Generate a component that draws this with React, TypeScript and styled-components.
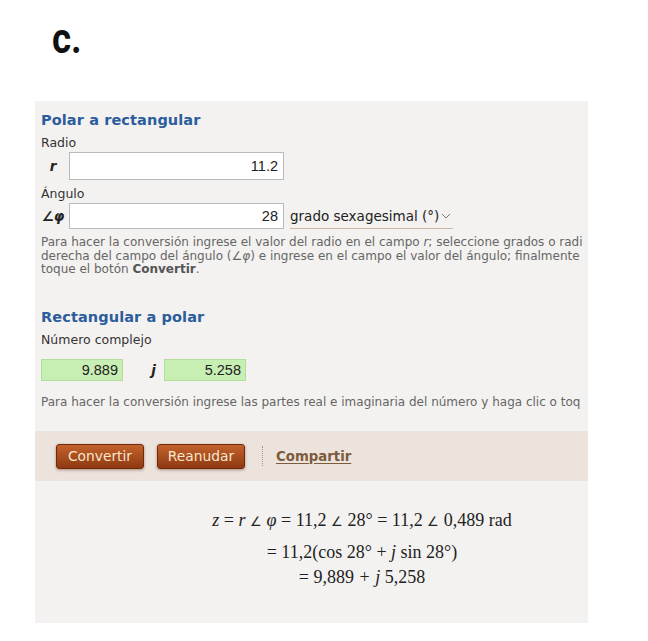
import React from "react";
import styled, { createGlobalStyle } from "styled-components";

const Global = createGlobalStyle`
  html, body { margin: 0; padding: 0; background: #ffffff; }
  body { width: 648px; height: 641px; overflow: hidden; }
`;

const Page = styled.div`
  padding: 18px 0 0 35px;
`;

const Letter = styled.div`
  font-family: Roboto, "Liberation Sans", sans-serif;
  font-weight: 700;
  font-size: 42px;
  line-height: 42px;
  color: #111;
  margin-left: 17px;
  transform: scaleX(0.87);
  transform-origin: left center;
  height: 42px;
`;

const Panel = styled.div`
  margin-top: 41px;
  width: 553px;
  height: 522px;
  background: #f3f2f0;
  overflow: hidden;
`;

const Inner = styled.div`
  width: 654px;
  font-family: "DejaVu Sans", Verdana, sans-serif;
  color: #333;
`;

const Section = styled.div`
  padding: 0 0 0 6px;
`;

const Heading = styled.h2<{ $top: number }>`
  margin: ${(p) => p.$top}px 0 0 0;
  font-size: 14.5px;
  line-height: 20px;
  font-weight: 700;
  color: #2b5c9c;
  letter-spacing: 0.1px;
`;

const Label = styled.div<{ $top: number }>`
  margin-top: ${(p) => p.$top}px;
  font-size: 12.5px;
  line-height: 16px;
  color: #333;
`;

const FieldRow = styled.div<{ $top: number }>`
  display: flex;
  align-items: center;
  margin-top: ${(p) => p.$top}px;
`;

const Sym = styled.span`
  width: 24px;
  text-align: center;
  font-style: italic;
  font-weight: 700;
  font-size: 13.5px;
  color: #222;
  margin-right: 4px;
`;

const TextBox = styled.div<{ $h: number }>`
  box-sizing: border-box;
  width: 215px;
  height: ${(p) => p.$h}px;
  background: #fff;
  border: 1px solid #b9b9b9;
  font-family: "Liberation Sans", Arial, sans-serif;
  font-size: 14.5px;
  color: #222;
  display: flex;
  align-items: center;
  justify-content: flex-end;
  padding-right: 5px;
`;

const Select = styled.div`
  margin-left: 6px;
  height: 26px;
  box-sizing: border-box;
  border-bottom: 1px solid #cbb9a6;
  display: flex;
  align-items: center;
  gap: 2px;
  font-size: 13.5px;
  color: #222;
  padding-right: 2px;
`;

const Help = styled.p<{ $top: number }>`
  margin: ${(p) => p.$top}px 0 0 0;
  font-size: 12px;
  line-height: 13.5px;
  color: #666;
  white-space: nowrap;
  i { font-style: italic; }
  b { font-weight: 700; color: #555; }
`;

const GreenBox = styled.div`
  box-sizing: border-box;
  width: 82px;
  height: 22px;
  background: #c8efb3;
  border: 1px solid #b2dd9b;
  font-family: "Liberation Sans", Arial, sans-serif;
  font-size: 14.5px;
  color: #222;
  display: flex;
  align-items: center;
  justify-content: flex-end;
  padding-right: 4px;
`;

const JSym = styled.span`
  box-sizing: border-box;
  width: 41px;
  text-align: right;
  padding-right: 8px;
  font-style: italic;
  font-weight: 700;
  font-size: 13.5px;
  color: #222;
`;

const Bar = styled.div`
  margin-top: 22px;
  height: 50px;
  background: #ece3dd;
  display: flex;
  align-items: center;
  padding-left: 21px;
`;

const Btn = styled.button`
  box-sizing: border-box;
  width: 88px;
  height: 25px;
  margin-right: 13px;
  border: 1px solid #6e2a0b;
  border-radius: 3px;
  background: linear-gradient(#c3622b, #8e3912);
  box-shadow: 0 1px 3px rgba(80, 30, 0, 0.45);
  color: #f8e6cc;
  font-family: "DejaVu Sans", Verdana, sans-serif;
  font-size: 13.8px;
  padding: 0;
`;

const Sep = styled.div`
  width: 0;
  height: 20px;
  border-left: 1px dotted #9a9a9a;
  margin: 0 13px 0 4px;
`;

const Link = styled.a`
  font-size: 13.3px;
  font-weight: 700;
  color: #7c5b3e;
  text-decoration: underline;
  text-underline-offset: 2px;
`;

const Formula = styled.div`
  margin-top: 25px;
  display: flex;
  flex-direction: column;
  align-items: center;
  font-family: "Liberation Serif", "Times New Roman", serif;
  font-size: 18px;
  color: #222;
  i { font-style: italic; }
`;

const FLine = styled.div<{ $h: number; $top: number }>`
  line-height: ${(p) => p.$h}px;
  margin-top: ${(p) => p.$top}px;
  white-space: nowrap;
`;

const Ang = styled.span`
  font-size: 13px;
`;

const Op = styled.span<{ $pad: number }>`
  padding: 0 ${(p) => p.$pad}px;
`;

const Chevron = () => (
  <svg width="10" height="8" viewBox="0 0 10 8">
    <path d="M1 2 L5 6 L9 2" fill="none" stroke="#777" strokeWidth="1" />
  </svg>
);

export default function App() {
  return (
    <>
      <Global />
      <Page>
        <Letter>c.</Letter>
        <Panel>
          <Inner>
            <Section>
              <Heading $top={9}>Polar a rectangular</Heading>
              <Label $top={5}>Radio</Label>
              <FieldRow $top={1}>
                <Sym>r</Sym>
                <TextBox $h={28}>11.2</TextBox>
              </FieldRow>
              <Label $top={6}>Ángulo</Label>
              <FieldRow $top={1}>
                <Sym>∠φ</Sym>
                <TextBox $h={26}>28</TextBox>
                <Select>
                  grado sexagesimal (°)
                  <Chevron />
                </Select>
              </FieldRow>
              <Help $top={7}>
                Para hacer la conversión ingrese el valor del radio en el campo <i>r</i>; seleccione grados o radi
                <br />
                derecha del campo del ángulo (<i>∠φ</i>) e ingrese en el campo el valor del ángulo; finalmente
                <br />
                toque el botón <b>Convertir</b>.
              </Help>
              <Heading $top={30}>Rectangular a polar</Heading>
              <Label $top={5}>Número complejo</Label>
              <FieldRow $top={11}>
                <GreenBox>9.889</GreenBox>
                <JSym>j</JSym>
                <GreenBox>5.258</GreenBox>
              </FieldRow>
              <Help $top={15}>
                Para hacer la conversión ingrese las partes real e imaginaria del número y haga clic o toq
              </Help>
            </Section>
            <Bar>
              <Btn>Convertir</Btn>
              <Btn>Reanudar</Btn>
              <Sep />
              <Link>Compartir</Link>
            </Bar>
            <Formula>
              <FLine $h={28} $top={0}>
                <i>z</i> = <i>r</i> <Ang>∠</Ang> <i>φ</i> = 11,2 <Ang>∠</Ang> 28° = 11,2 <Ang>∠</Ang> 0,489 rad
              </FLine>
              <FLine $h={28} $top={2}>
                = 11,2(cos 28° <Op $pad={0}>+</Op> <i>j</i> sin 28°)
              </FLine>
              <FLine $h={22} $top={0}>
                = 9,889 <Op $pad={1}>+</Op> <i>j</i> 5,258
              </FLine>
            </Formula>
          </Inner>
        </Panel>
      </Page>
    </>
  );
}
